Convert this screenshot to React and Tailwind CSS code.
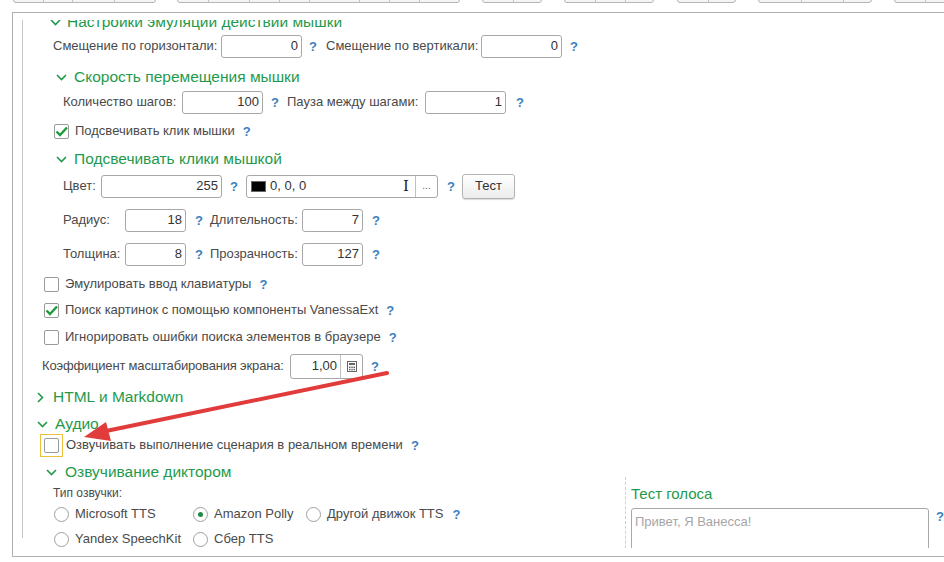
import React from 'react';

const GREEN = 'text-[#1f9a4b]';

const Help = ({ className = '' }) => (
  <span className={`text-[13px] font-bold text-[#3b7fc0] leading-none ${className}`}>?</span>
);

const ChevronDown = () => (
  <svg width="11" height="7" viewBox="0 0 11 7" className="shrink-0">
    <path d="M1 1 L5.5 5.5 L10 1" fill="none" stroke="#1f9a4b" strokeWidth="1.6" />
  </svg>
);

const ChevronRight = () => (
  <svg width="7" height="11" viewBox="0 0 7 11" className="shrink-0">
    <path d="M1 1 L5.5 5.5 L1 10" fill="none" stroke="#1f9a4b" strokeWidth="1.6" />
  </svg>
);

const Field = ({ value, w }) => (
  <div className={`h-[23px] ${w} border border-[#a8a8a8] rounded-[3px] bg-white flex items-center justify-end pr-[3px] text-[13px] text-[#333]`}>
    {value}
  </div>
);

const Checkbox = ({ checked }) => (
  <div className="w-[15px] h-[15px] border border-[#9a9a9a] rounded-[2px] bg-white flex items-center justify-center shrink-0">
    {checked && (
      <svg width="13" height="11" viewBox="0 0 13 11">
        <path d="M1.5 5.5 L5 9 L12 1.5" fill="none" stroke="#1d9a3a" strokeWidth="2.4" />
      </svg>
    )}
  </div>
);

const Radio = ({ checked }) => (
  <div className="w-[15px] h-[15px] rounded-full border border-[#a0a0a0] bg-white flex items-center justify-center shrink-0">
    {checked && <div className="w-[5px] h-[5px] rounded-full bg-[#1f8a45]" />}
  </div>
);

const Label = ({ w, children, className = '' }) => (
  <div className={`${w} shrink-0 text-[13px] text-[#4a4a4a] whitespace-nowrap ${className}`}>{children}</div>
);

const toolbarGroups = [
  { x: 'ml-[13px]', parts: ['w-[29px]', 'w-[29px]', 'w-[42px]', 'w-[41px]'] },
  { x: 'ml-[21px]', parts: ['w-[30px]', 'w-[41px]', 'w-[30px]', 'w-[30px]', 'w-[50px]', 'w-[30px]', 'w-[30px]', 'w-[40px]'] },
  { x: 'ml-[22px]', parts: ['w-[30px]', 'w-[28px]'] },
  { x: 'ml-[22px]', parts: ['w-[30px]', 'w-[30px]', 'w-[28px]'] },
  { x: 'ml-[23px]', parts: ['w-[30px]', 'w-[27px]'] },
  { x: 'ml-[22px]', parts: ['w-[42px]', 'w-[42px]', 'w-[28px]'] },
  { x: 'ml-[22px]', parts: ['w-[30px]', 'w-[40px]'] },
];

export default function App() {
  return (
    <div className="relative w-[944px] h-[562px] bg-white overflow-hidden font-['Liberation_Sans',Arial,sans-serif]">
      {/* toolbar remnants */}
      <div className="h-[12px] overflow-hidden">
        <div className="flex -mt-[20px]">
          {toolbarGroups.map((g, i) => (
            <div key={i} className={`${g.x} flex h-[23px] border border-[#b5b5b5] rounded-[3px] bg-[#f4f4f4] shrink-0`}>
              {g.parts.map((p, j) => (
                <div key={j} className={`${p} h-full ${j > 0 ? 'border-l border-[#c4c4c4]' : ''}`} />
              ))}
            </div>
          ))}
        </div>
      </div>

      {/* panel */}
      <div className="ml-[12px] w-[940px] h-[545px] border-t border-l border-b border-[#b0b0b0] pt-[7px] pb-[8px]">
        <div className="h-[528px] overflow-hidden">
          <div className="ml-[9px] h-full border-l border-[#c4c4c4]">
            {/* Настройки эмуляции (scrolled, partly hidden) */}
            <div className="-mt-[10px] h-[24px] flex items-center pl-[27px] gap-[6px]">
              <ChevronDown />
              <span className={`text-[15.5px] ${GREEN}`}>Настройки эмуляции действий мышки</span>
            </div>

            <div className="mt-[0px] h-[24px] flex items-center pl-[30px]">
              <Label w="w-[168px]">Смещение по горизонтали:</Label>
              <Field value="0" w="w-[81px]" />
              <div className="w-[24px] shrink-0 pl-[7px]"><Help /></div>
              <Label w="w-[155px]">Смещение по вертикали:</Label>
              <Field value="0" w="w-[81px]" />
              <Help className="ml-[8px]" />
            </div>

            <div className="mt-[7px] h-[24px] flex items-center pl-[33px] gap-[7px]">
              <ChevronDown />
              <span className={`text-[15.5px] ${GREEN}`}>Скорость перемещения мышки</span>
            </div>

            <div className="mt-[1px] h-[24px] flex items-center pl-[40px]">
              <Label w="w-[119px]">Количество шагов:</Label>
              <Field value="100" w="w-[81px]" />
              <div className="w-[24px] shrink-0 pl-[8px]"><Help /></div>
              <Label w="w-[138px]">Пауза между шагами:</Label>
              <Field value="1" w="w-[81px]" />
              <Help className="ml-[10px]" />
            </div>

            <div className="mt-[5px] h-[24px] flex items-center pl-[31px]">
              <Checkbox checked />
              <span className="ml-[6px] text-[13px] text-[#4a4a4a]">Подсвечивать клик мышки</span>
              <Help className="ml-[8px]" />
            </div>

            <div className="mt-[4px] h-[24px] flex items-center pl-[33px] gap-[7px]">
              <ChevronDown />
              <span className={`text-[15.5px] ${GREEN}`}>Подсвечивать клики мышкой</span>
            </div>

            <div className="mt-[3px] h-[24px] flex items-center pl-[40px]">
              <Label w="w-[38px]">Цвет:</Label>
              <Field value="255" w="w-[121px]" />
              <div className="w-[24px] shrink-0 pl-[8px]"><Help /></div>
              <div className="w-[192px] h-[23px] border border-[#a8a8a8] rounded-[3px] flex items-center shrink-0">
                <div className="ml-[4px] w-[15px] h-[11px] bg-black border border-[#666]" />
                <span className="ml-[4px] text-[13px] text-[#333]">0, 0, 0</span>
                <span className="ml-auto mr-[6px] text-[15px] text-[#222] leading-none font-['DejaVu_Serif',serif]">I</span>
                <div className="w-[22px] h-full border-l border-[#c0c0c0] flex items-center justify-center text-[10px] text-[#666] leading-none">...</div>
              </div>
              <div className="w-[24px] shrink-0 pl-[9px]"><Help /></div>
              <div className="w-[53px] h-[25px] border border-[#b4b4b4] rounded-[3px] bg-gradient-to-b from-white to-[#ececec] shadow-[0_1px_1px_rgba(0,0,0,0.15)] flex items-center justify-center text-[13px] text-[#333]">
                Тест
              </div>
            </div>

            <div className="mt-[10px] h-[24px] flex items-center pl-[40px]">
              <Label w="w-[62px]">Радиус:</Label>
              <Field value="18" w="w-[61px]" />
              <div className="w-[24px] shrink-0 pl-[9px]"><Help /></div>
              <Label w="w-[92px]">Длительность:</Label>
              <Field value="7" w="w-[61px]" />
              <Help className="ml-[9px]" />
            </div>

            <div className="mt-[10px] h-[24px] flex items-center pl-[40px]">
              <Label w="w-[62px]">Толщина:</Label>
              <Field value="8" w="w-[61px]" />
              <div className="w-[24px] shrink-0 pl-[9px]"><Help /></div>
              <Label w="w-[92px]">Прозрачность:</Label>
              <Field value="127" w="w-[61px]" />
              <Help className="ml-[9px]" />
            </div>

            <div className="mt-[6px] h-[24px] flex items-center pl-[21px]">
              <Checkbox />
              <span className="ml-[6px] text-[13px] text-[#4a4a4a]">Эмулировать ввод клавиатуры</span>
              <Help className="ml-[8px]" />
            </div>

            <div className="mt-[2px] h-[24px] flex items-center pl-[21px]">
              <Checkbox checked />
              <span className="ml-[6px] text-[13px] text-[#4a4a4a]">Поиск картинок с помощью компоненты VanessaExt</span>
              <Help className="ml-[8px]" />
            </div>

            <div className="mt-[3px] h-[24px] flex items-center pl-[21px]">
              <Checkbox />
              <span className="ml-[6px] text-[13px] text-[#4a4a4a]">Игнорировать ошибки поиска элементов в браузере</span>
              <Help className="ml-[8px]" />
            </div>

            <div className="mt-[5px] h-[24px] flex items-center pl-[19px]">
              <Label w="w-[248px]" className="tracking-[-0.18px]">Коэффициент масштабирования экрана:</Label>
              <div className="w-[73px] h-[25px] border border-[#a8a8a8] rounded-[3px] flex items-center shrink-0">
                <span className="flex-1 text-right pr-[3px] text-[13px] text-[#333]">1,00</span>
                <div className="w-[22px] h-full border-l border-[#c0c0c0] flex items-center justify-center">
                  <svg width="10" height="11" viewBox="0 0 10 11">
                    <rect x="0.5" y="0.5" width="9" height="10" fill="none" stroke="#666" />
                    <rect x="2" y="2" width="6" height="2" fill="#666" />
                    <rect x="2" y="5.5" width="1.5" height="1.5" fill="#666" />
                    <rect x="4.3" y="5.5" width="1.5" height="1.5" fill="#666" />
                    <rect x="6.5" y="5.5" width="1.5" height="1.5" fill="#666" />
                    <rect x="2" y="7.8" width="1.5" height="1.5" fill="#666" />
                    <rect x="4.3" y="7.8" width="1.5" height="1.5" fill="#666" />
                    <rect x="6.5" y="7.8" width="1.5" height="1.5" fill="#666" />
                  </svg>
                </div>
              </div>
              <Help className="ml-[8px]" />
            </div>

            <div className="mt-[7px] h-[24px] flex items-center pl-[14px] gap-[9px]">
              <ChevronRight />
              <span className={`text-[15.5px] ${GREEN}`}>HTML и Markdown</span>
            </div>

            <div className="mt-[3px] h-[24px] flex items-center pl-[14px] gap-[7px]">
              <ChevronDown />
              <span className={`text-[15.5px] ${GREEN}`}>Аудио</span>
            </div>

            <div className="-mt-[3px] h-[24px] flex items-center pl-[17px]">
              <div className="w-[23px] h-[23px] border border-[#e8c23a] flex items-center justify-center shrink-0">
                <Checkbox />
              </div>
              <span className="ml-[3px] text-[13px] text-[#4a4a4a]">Озвучивать выполнение сценария в реальном времени</span>
              <Help className="ml-[8px]" />
            </div>

            <div className="mt-[3px] h-[24px] flex items-center pl-[23px] gap-[8px]">
              <ChevronDown />
              <span className={`text-[15.5px] ${GREEN}`}>Озвучивание диктором</span>
            </div>

            <div className="flex -mt-[3px]">
              <div className="w-[602px] shrink-0">
                <div className="h-[24px] flex items-center pl-[30px]">
                  <span className="text-[12px] text-[#4a4a4a]">Тип озвучки:</span>
                </div>
                <div className="-mt-[3px] h-[24px] flex items-center pl-[31px] text-[13px] text-[#4a4a4a]">
                  <div className="w-[139px] flex items-center gap-[6px]"><Radio />Microsoft TTS</div>
                  <div className="w-[113px] flex items-center gap-[6px]"><Radio checked />Amazon Polly</div>
                  <div className="flex items-center gap-[6px]"><Radio />Другой движок TTS</div>
                  <Help className="ml-[9px]" />
                </div>
                <div className="mt-[1px] h-[24px] flex items-center pl-[31px] text-[13px] text-[#4a4a4a]">
                  <div className="w-[139px] flex items-center gap-[6px]"><Radio />Yandex SpeechKit</div>
                  <div className="flex items-center gap-[6px]"><Radio />Сбер TTS</div>
                </div>
              </div>
              <div className="mt-[-4px] border-l border-dashed border-[#cfcfcf] pl-[5px] flex-1">
                <div className="h-[28px] flex items-end">
                  <span className={`text-[15px] ${GREEN}`}>Тест голоса</span>
                </div>
                <div className="flex mt-[3px]">
                  <div className="w-[298px] h-[60px] border border-[#a8a8a8] rounded-[3px] px-[3px] pt-[3px] text-[13px] text-[#a6a6a6]">
                    Привет, Я Ванесса!
                  </div>
                  <Help className="ml-[7px] mt-[2px]" />
                </div>
              </div>
            </div>
          </div>
        </div>
      </div>

      {/* red arrow annotation */}
      <svg className="absolute left-0 top-0 pointer-events-none" width="944" height="562">
        <line x1="387" y1="373" x2="106" y2="431" stroke="#e23b3b" strokeWidth="4" strokeLinecap="round" />
        <polygon points="84,437 111,441 106,422" fill="#e23b3b" />
      </svg>
    </div>
  );
}
